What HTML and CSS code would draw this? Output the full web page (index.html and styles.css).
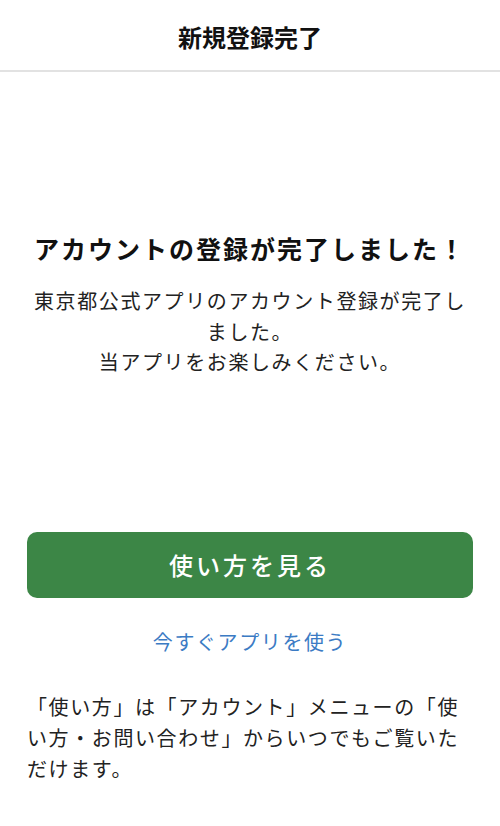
FILE: index.html
```html
<!DOCTYPE html>
<html lang="ja">
<head>
<meta charset="utf-8">
<title>新規登録完了</title>
<link rel="stylesheet" href="styles.css">
</head>
<body>
<header class="header">
  <h1 class="header-title">新規登録完了</h1>
</header>
<main class="content">
  <h2 class="heading">アカウントの登録が完了しました！</h2>
  <p class="message">東京都公式アプリのアカウント登録が完了しました。<br>当アプリをお楽しみください。</p>
  <button class="primary-btn" type="button">使い方を見る</button>
  <a class="link" href="#">今すぐアプリを使う</a>
  <p class="note">「使い方」は「アカウント」メニューの「使い方・お問い合わせ」からいつでもご覧いただけます。</p>
</main>
</body>
</html>
```
FILE: styles.css
```css
html, body {
  margin: 0;
  padding: 0;
  background: #ffffff;
}
body {
  font-family: "Noto Sans CJK JP", "Noto Sans", sans-serif;
  color: #1a1a1a;
}
.header {
  height: 70px;
  border-bottom: 2px solid #e2e2e2;
  display: flex;
  align-items: center;
  justify-content: center;
}
.header-title {
  margin: 0;
  font-size: 24px;
  font-weight: 700;
  line-height: 1;
  color: #111;
  padding-top: 4px;
}
.content {
  padding: 0 27px;
  display: flex;
  flex-direction: column;
}
.heading {
  margin: 158px 0 0;
  font-size: 25px;
  font-weight: 700;
  line-height: 36px;
  letter-spacing: 2px;
  text-align: center;
  color: #111;
}
.message {
  margin: 20px 0 0;
  font-size: 20px;
  line-height: 30.5px;
  letter-spacing: 1.6px;
  text-align: center;
  color: #222;
}
.primary-btn {
  margin-top: 154px;
  height: 66px;
  border: none;
  border-radius: 10px;
  background: #3c8646;
  color: #fff;
  font-family: inherit;
  font-size: 24px;
  font-weight: 500;
  letter-spacing: 3px;
  padding: 0;
}
.link {
  margin-top: 29px;
  align-self: center;
  font-size: 20px;
  line-height: 30px;
  letter-spacing: 1.6px;
  color: #3b7bc4;
  text-decoration: none;
}
.note {
  margin: 34px 0 0;
  font-size: 20px;
  line-height: 31px;
  letter-spacing: 1.6px;
  color: #222;
}
```
